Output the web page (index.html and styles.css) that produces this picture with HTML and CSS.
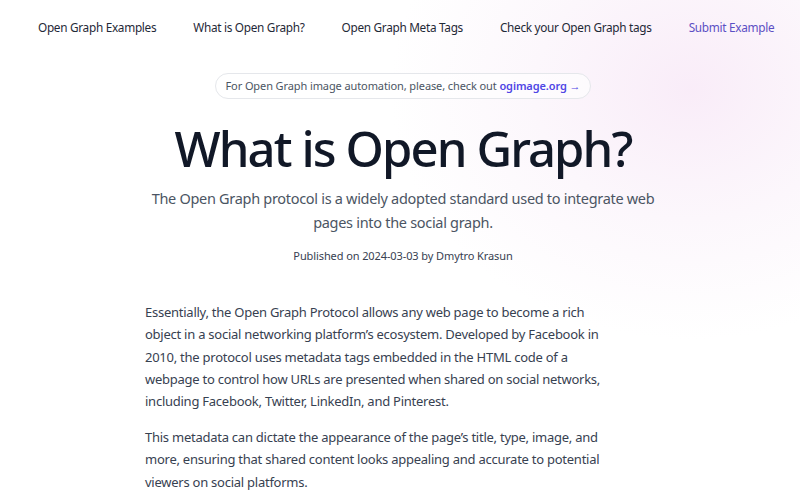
FILE: index.html
```html
<!DOCTYPE html>
<html lang="en">
<head>
<meta charset="utf-8">
<title>What is Open Graph?</title>
<link rel="stylesheet" href="styles.css">
</head>
<body>
<header class="nav">
  <a class="nav-link" href="#">Open Graph Examples</a>
  <a class="nav-link" href="#">What is Open Graph?</a>
  <a class="nav-link" href="#">Open Graph Meta Tags</a>
  <a class="nav-link" href="#">Check your Open Graph tags</a>
  <a class="nav-link accent" href="#">Submit Example</a>
</header>
<main class="main">
  <div class="hero">
    <div class="pill">For Open Graph image automation, please, check out <a class="pill-link" href="#">ogimage.org →</a></div>
    <h1 class="title">What is Open Graph?</h1>
    <p class="subtitle">The Open Graph protocol is a widely adopted standard used to integrate web pages into the social graph.</p>
    <p class="meta">Published on 2024-03-03 by Dmytro Krasun</p>
  </div>
  <article class="article">
    <p>Essentially, the Open Graph Protocol allows any web page to become a rich object in a social networking platform’s ecosystem. Developed by Facebook in 2010, the protocol uses metadata tags embedded in the HTML code of a webpage to control how URLs are presented when shared on social networks, including Facebook, Twitter, LinkedIn, and Pinterest.</p>
    <p>This metadata can dictate the appearance of the page’s title, type, image, and more, ensuring that shared content looks appealing and accurate to potential viewers on social platforms.</p>
  </article>
</main>
</body>
</html>
```
FILE: styles.css
```css
* { box-sizing: border-box; }
html, body { margin: 0; padding: 0; }
body {
  font-family: "Noto Sans", "Open Sans", sans-serif;
  background-color: #fff;
  background-image: radial-gradient(ellipse 300px 250px at 690px 90px, rgba(247, 230, 246, 0.75), rgba(247, 234, 247, 0.35) 55%, rgba(255, 255, 255, 0));
  background-repeat: no-repeat;
  color: #111827;
  width: 800px;
  height: 503px;
  overflow: hidden;
}
.nav {
  display: flex;
  gap: 37px;
  padding: 17px 0 0 38px;
  height: 52px;
}
.nav-link {
  font-size: 11.8px;
  line-height: 20px;
  color: #1f2937;
  text-decoration: none;
  letter-spacing: -0.3px;
  white-space: nowrap;
}
.nav-link.accent { color: #5b4fc4; }
.main {
  display: flex;
  flex-direction: column;
  align-items: center;
}
.hero {
  display: flex;
  flex-direction: column;
  align-items: center;
  text-align: center;
  width: 560px;
  padding-left: 6px;
}
.pill {
  margin-top: 21px;
  border: 1px solid #e5e7eb;
  border-radius: 999px;
  padding: 3px 10px;
  font-size: 11px;
  line-height: 18px;
  color: #4b5563;
  letter-spacing: -0.1px;
  background: rgba(255, 255, 255, 0.6);
}
.pill-link {
  color: #4f46e5;
  text-decoration: none;
  font-weight: 600;
}
.title {
  margin: 18px 0 0;
  font-size: 49px;
  line-height: 62px;
  font-weight: 500;
  letter-spacing: -1.9px;
  color: #111827;
}
.subtitle {
  margin: 7px 0 0;
  max-width: 510px;
  font-size: 14.5px;
  line-height: 24px;
  color: #4b5563;
  letter-spacing: -0.3px;
}
.meta {
  margin: 13px 0 0;
  font-size: 11px;
  line-height: 18px;
  color: #374151;
  letter-spacing: -0.1px;
}
.article {
  width: 510px;
  margin-top: 36px;
  padding-right: 45px;
  font-size: 13px;
  line-height: 22.3px;
  color: #374151;
  letter-spacing: -0.25px;
}
.article p { margin: 0 0 13.7px; }
```
